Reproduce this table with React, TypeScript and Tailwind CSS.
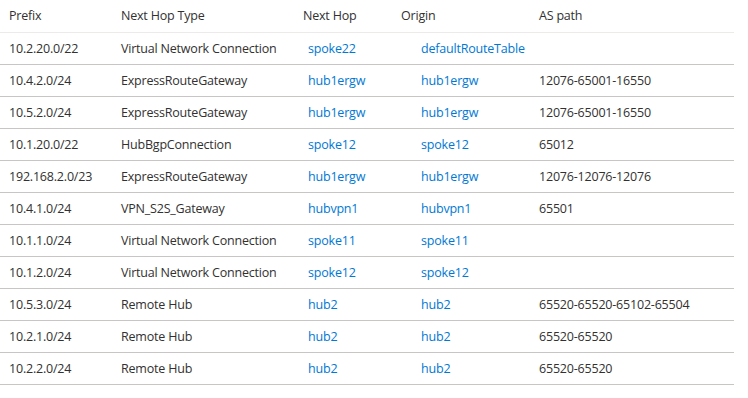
import React from 'react';

type Route = {
  prefix: string;
  type: string;
  hop: string;
  origin: string;
  path: string;
};

const routes: Route[] = [
  { prefix: '10.2.20.0/22', type: 'Virtual Network Connection', hop: 'spoke22', origin: 'defaultRouteTable', path: '' },
  { prefix: '10.4.2.0/24', type: 'ExpressRouteGateway', hop: 'hub1ergw', origin: 'hub1ergw', path: '12076-65001-16550' },
  { prefix: '10.5.2.0/24', type: 'ExpressRouteGateway', hop: 'hub1ergw', origin: 'hub1ergw', path: '12076-65001-16550' },
  { prefix: '10.1.20.0/22', type: 'HubBgpConnection', hop: 'spoke12', origin: 'spoke12', path: '65012' },
  { prefix: '192.168.2.0/23', type: 'ExpressRouteGateway', hop: 'hub1ergw', origin: 'hub1ergw', path: '12076-12076-12076' },
  { prefix: '10.4.1.0/24', type: 'VPN_S2S_Gateway', hop: 'hubvpn1', origin: 'hubvpn1', path: '65501' },
  { prefix: '10.1.1.0/24', type: 'Virtual Network Connection', hop: 'spoke11', origin: 'spoke11', path: '' },
  { prefix: '10.1.2.0/24', type: 'Virtual Network Connection', hop: 'spoke12', origin: 'spoke12', path: '' },
  { prefix: '10.5.3.0/24', type: 'Remote Hub', hop: 'hub2', origin: 'hub2', path: '65520-65520-65102-65504' },
  { prefix: '10.2.1.0/24', type: 'Remote Hub', hop: 'hub2', origin: 'hub2', path: '65520-65520' },
  { prefix: '10.2.2.0/24', type: 'Remote Hub', hop: 'hub2', origin: 'hub2', path: '65520-65520' },
];

// column widths: prefix | next hop type | next hop | origin | as path
const cols = 'grid grid-cols-[112px_182px_98px_138px_204px]';

export default function App() {
  return (
    <div className="bg-white w-[748px] h-[398px] text-[12.5px] tracking-[-0.2px] text-[#323130] font-['Segoe_UI','Open_Sans',sans-serif]">
      <div className="w-[734px]">
        <div className={`${cols} h-[33px] items-center border-b border-[#edebe9]`}>
          <div className="pl-[9px]">Prefix</div>
          <div className="pl-[9px]">Next Hop Type</div>
          <div className="pl-[9px]">Next Hop</div>
          <div className="pl-[9px]">Origin</div>
          <div className="pl-[9px]">AS path</div>
        </div>
        {routes.map((r, i) => (
          <div key={i} className={`${cols} h-[32px] pt-px items-center border-b border-[#c8c6c4]`}>
            <div className="pl-[9px]">{r.prefix}</div>
            <div className="pl-[9px] whitespace-nowrap">{r.type}</div>
            <div className="pl-[14px] text-[#0078d4]">{r.hop}</div>
            <div className="pl-[29px] text-[#0078d4]">{r.origin}</div>
            <div className="pl-[9px]">{r.path}</div>
          </div>
        ))}
      </div>
    </div>
  );
}
